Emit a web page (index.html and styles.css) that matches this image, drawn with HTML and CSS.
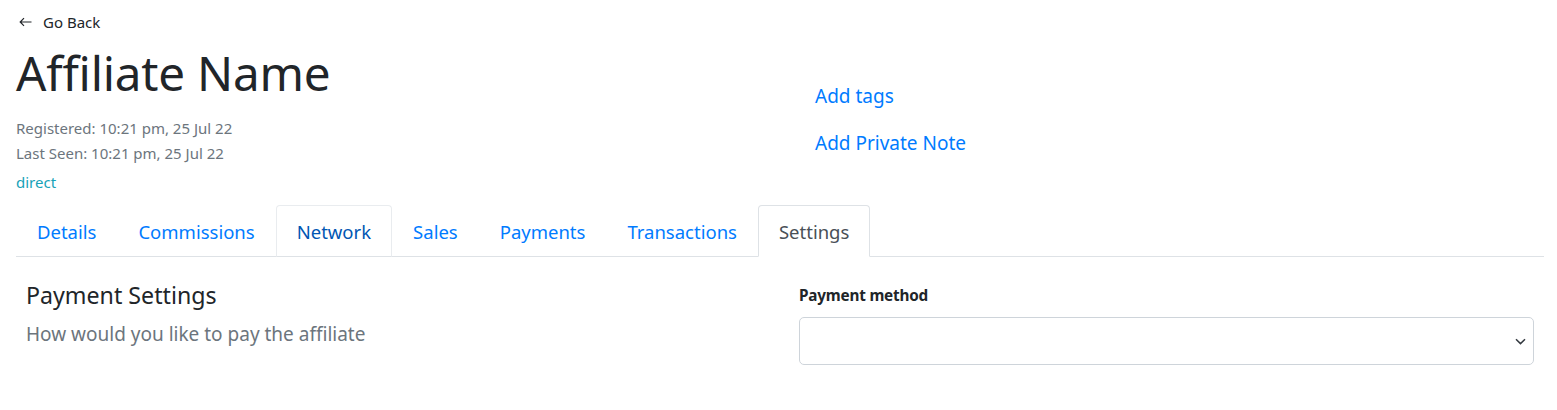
FILE: index.html
```html
<!DOCTYPE html>
<html lang="en">
<head>
<meta charset="utf-8">
<title>Affiliate Name</title>
<link rel="stylesheet" href="styles.css">
</head>
<body>
<div class="page">
  <a class="back" href="#">
    <svg class="back-icon" width="13" height="10" viewBox="0 0 13 10" aria-hidden="true"><path d="M12.5 5H1.2M5 1.2 1.2 5 5 8.8" fill="none" stroke="#212529" stroke-width="1.2"/></svg>
    <span>Go Back</span>
  </a>
  <div class="header">
    <div class="header-main">
      <h1 class="title">Affiliate Name</h1>
      <div class="meta">Registered: 10:21 pm, 25 Jul 22</div>
      <div class="meta">Last Seen: 10:21 pm, 25 Jul 22</div>
      <div class="source">direct</div>
    </div>
    <div class="header-side">
      <a class="side-link" href="#">Add tags</a>
      <a class="side-link" href="#">Add Private Note</a>
    </div>
  </div>
  <nav class="tabs">
    <a class="tab" href="#">Details</a>
    <a class="tab" href="#">Commissions</a>
    <a class="tab tab-hover" href="#">Network</a>
    <a class="tab" href="#">Sales</a>
    <a class="tab" href="#">Payments</a>
    <a class="tab" href="#">Transactions</a>
    <a class="tab tab-active" href="#">Settings</a>
  </nav>
  <div class="settings">
    <div class="settings-info">
      <h4 class="settings-title">Payment Settings</h4>
      <p class="settings-desc">How would you like to pay the affiliate</p>
    </div>
    <div class="settings-form">
      <label class="field-label">Payment method</label>
      <div class="select">
        <svg class="chevron" width="11" height="7" viewBox="0 0 11 7" aria-hidden="true"><path d="M1 1.2 5.5 5.6 10 1.2" fill="none" stroke="#343a40" stroke-width="1.5"/></svg>
      </div>
    </div>
  </div>
</div>
</body>
</html>
```

FILE: styles.css
```css
* { box-sizing: border-box; }
html, body { margin: 0; padding: 0; background: #fff; }
body {
  font-family: "Noto Sans", "Open Sans", sans-serif;
  color: #212529;
}
a { text-decoration: none; }
.page {
  padding: 11px 13px 0 16px;
}
.back {
  display: flex;
  align-items: center;
  height: 21px;
  color: #212529;
  font-size: 15px;
  padding-left: 3px;
  width: max-content;
}
.back-icon { margin-right: 11px; }
.header {
  display: grid;
  grid-template-columns: 799px 1fr;
}
.title {
  font-size: 47.6px;
  font-weight: 400;
  line-height: 62px;
  margin: 10px 0 12px;
  letter-spacing: -0.2px;
}
.meta {
  font-size: 15px;
  line-height: 25px;
  color: #6c757d;
}
.source {
  font-size: 15px;
  line-height: 24px;
  margin-top: 4px;
  color: #17a2b8;
}
.header-side {
  display: flex;
  flex-direction: column;
  gap: 17px;
  padding: 49px 0 0 0;
}
.side-link {
  font-size: 19px;
  line-height: 30px;
  color: #007bff;
  width: max-content;
}
.tabs {
  display: flex;
  margin-top: 11px;
  border-bottom: 1px solid #dee2e6;
}
.tab {
  display: block;
  padding: 11px 20px 9px;
  font-size: 18.5px;
  line-height: 30px;
  color: #007bff;
  border: 1px solid transparent;
  border-top-left-radius: 4px;
  border-top-right-radius: 4px;
  margin-bottom: -1px;
}
.tab-hover {
  color: #0056b3;
  border-color: #e9ecef #e9ecef #dee2e6;
}
.tab-active {
  color: #495057;
  background: #fff;
  border-color: #dee2e6 #dee2e6 #fff;
}
.settings {
  display: grid;
  grid-template-columns: 773px 1fr;
  padding: 24px 10px 0 10px;
}
.settings-title {
  font-size: 23.2px;
  font-weight: 400;
  line-height: 28px;
  margin: 0 0 12px;
}
.settings-desc {
  font-size: 19px;
  line-height: 27px;
  color: #6c757d;
  margin: 0;
}
.field-label {
  display: block;
  font-size: 15.3px;
  font-weight: 700;
  line-height: 22px;
  margin: 3px 0 11px;
  letter-spacing: -0.2px;
}
.select {
  display: flex;
  align-items: center;
  justify-content: flex-end;
  height: 48px;
  border: 1px solid #ced4da;
  border-radius: 5px;
  padding-right: 7px;
}
```
